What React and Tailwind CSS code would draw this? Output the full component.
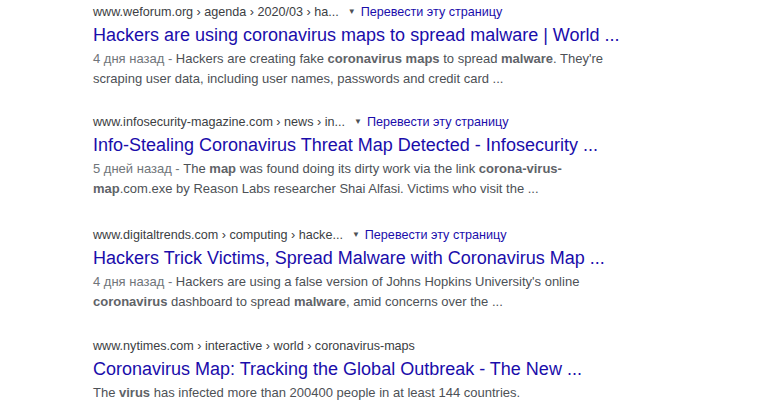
const results = [
  {
    url: 'www.weforum.org › agenda › 2020/03 › ha...',
    translate: true,
    gap: 'mb-[23px]',
    title: 'Hackers are using coronavirus maps to spread malware | World ...',
    date: '4 дня назад',
    snippet: [
      ['Hackers are creating fake ', false],
      ['coronavirus maps', true],
      [' to spread ', false],
      ['malware', true],
      [". They're scraping user data, including user names, passwords and credit card ...", false],
    ],
  },
  {
    url: 'www.infosecurity-magazine.com › news › in...',
    translate: true,
    gap: 'mb-[26px]',
    title: 'Info-Stealing Coronavirus Threat Map Detected - Infosecurity ...',
    date: '5 дней назад',
    snippet: [
      ['The ', false],
      ['map', true],
      [' was found doing its dirty work via the link ', false],
      ['corona-virus-map', true],
      ['.com.exe by Reason Labs researcher Shai Alfasi. Victims who visit the ...', false],
    ],
  },
  {
    url: 'www.digitaltrends.com › computing › hacke...',
    translate: true,
    gap: 'mb-[24px]',
    title: 'Hackers Trick Victims, Spread Malware with Coronavirus Map ...',
    date: '4 дня назад',
    snippet: [
      ["Hackers are using a false version of Johns Hopkins University's online ", false],
      ['coronavirus', true],
      [' dashboard to spread ', false],
      ['malware', true],
      [', amid concerns over the ...', false],
    ],
  },
  {
    url: 'www.nytimes.com › interactive › world › coronavirus-maps',
    translate: false,
    gap: 'mb-[24px]',
    title: 'Coronavirus Map: Tracking the Global Outbreak - The New ...',
    date: null,
    snippet: [
      ['The ', false],
      ['virus', true],
      [' has infected more than 200400 people in at least 144 countries.', false],
    ],
  },
];

const Result = ({ r }) => (
  <div className={r.gap}>
    <div className="flex items-center h-[20px] text-[12.6px] text-[#3c4043] leading-[20px] whitespace-nowrap">
      <span>{r.url}</span>
      {r.translate && (
        <>
          <span className="ml-[9px] mr-[5px] text-[8px] text-[#4d5156]">▼</span>
          <span className="text-[#1a0dab]">Перевести эту страницу</span>
        </>
      )}
    </div>
    <div className="mt-[1px] h-[24px] text-[18px] leading-[24px] text-[#1a0dab] whitespace-nowrap">
      {r.title}
    </div>
    <div className="mt-[2px] w-[540px] text-[13px] leading-[20px] text-[#4d5156]">
      {r.date && <span className="text-[#70757a]">{r.date} - </span>}
      {r.snippet.map(([t, b], i) =>
        b ? (
          <b key={i} className="font-bold text-[#5f6368]">{t}</b>
        ) : (
          <span key={i}>{t}</span>
        )
      )}
    </div>
  </div>
);

export default function App() {
  return (
    <div className="w-[780px] h-[410px] overflow-hidden bg-white pt-[2px] pl-[93px] font-['Liberation_Sans',Arial,sans-serif]">
      {results.map((r) => (
        <Result key={r.url} r={r} />
      ))}
    </div>
  );
}
